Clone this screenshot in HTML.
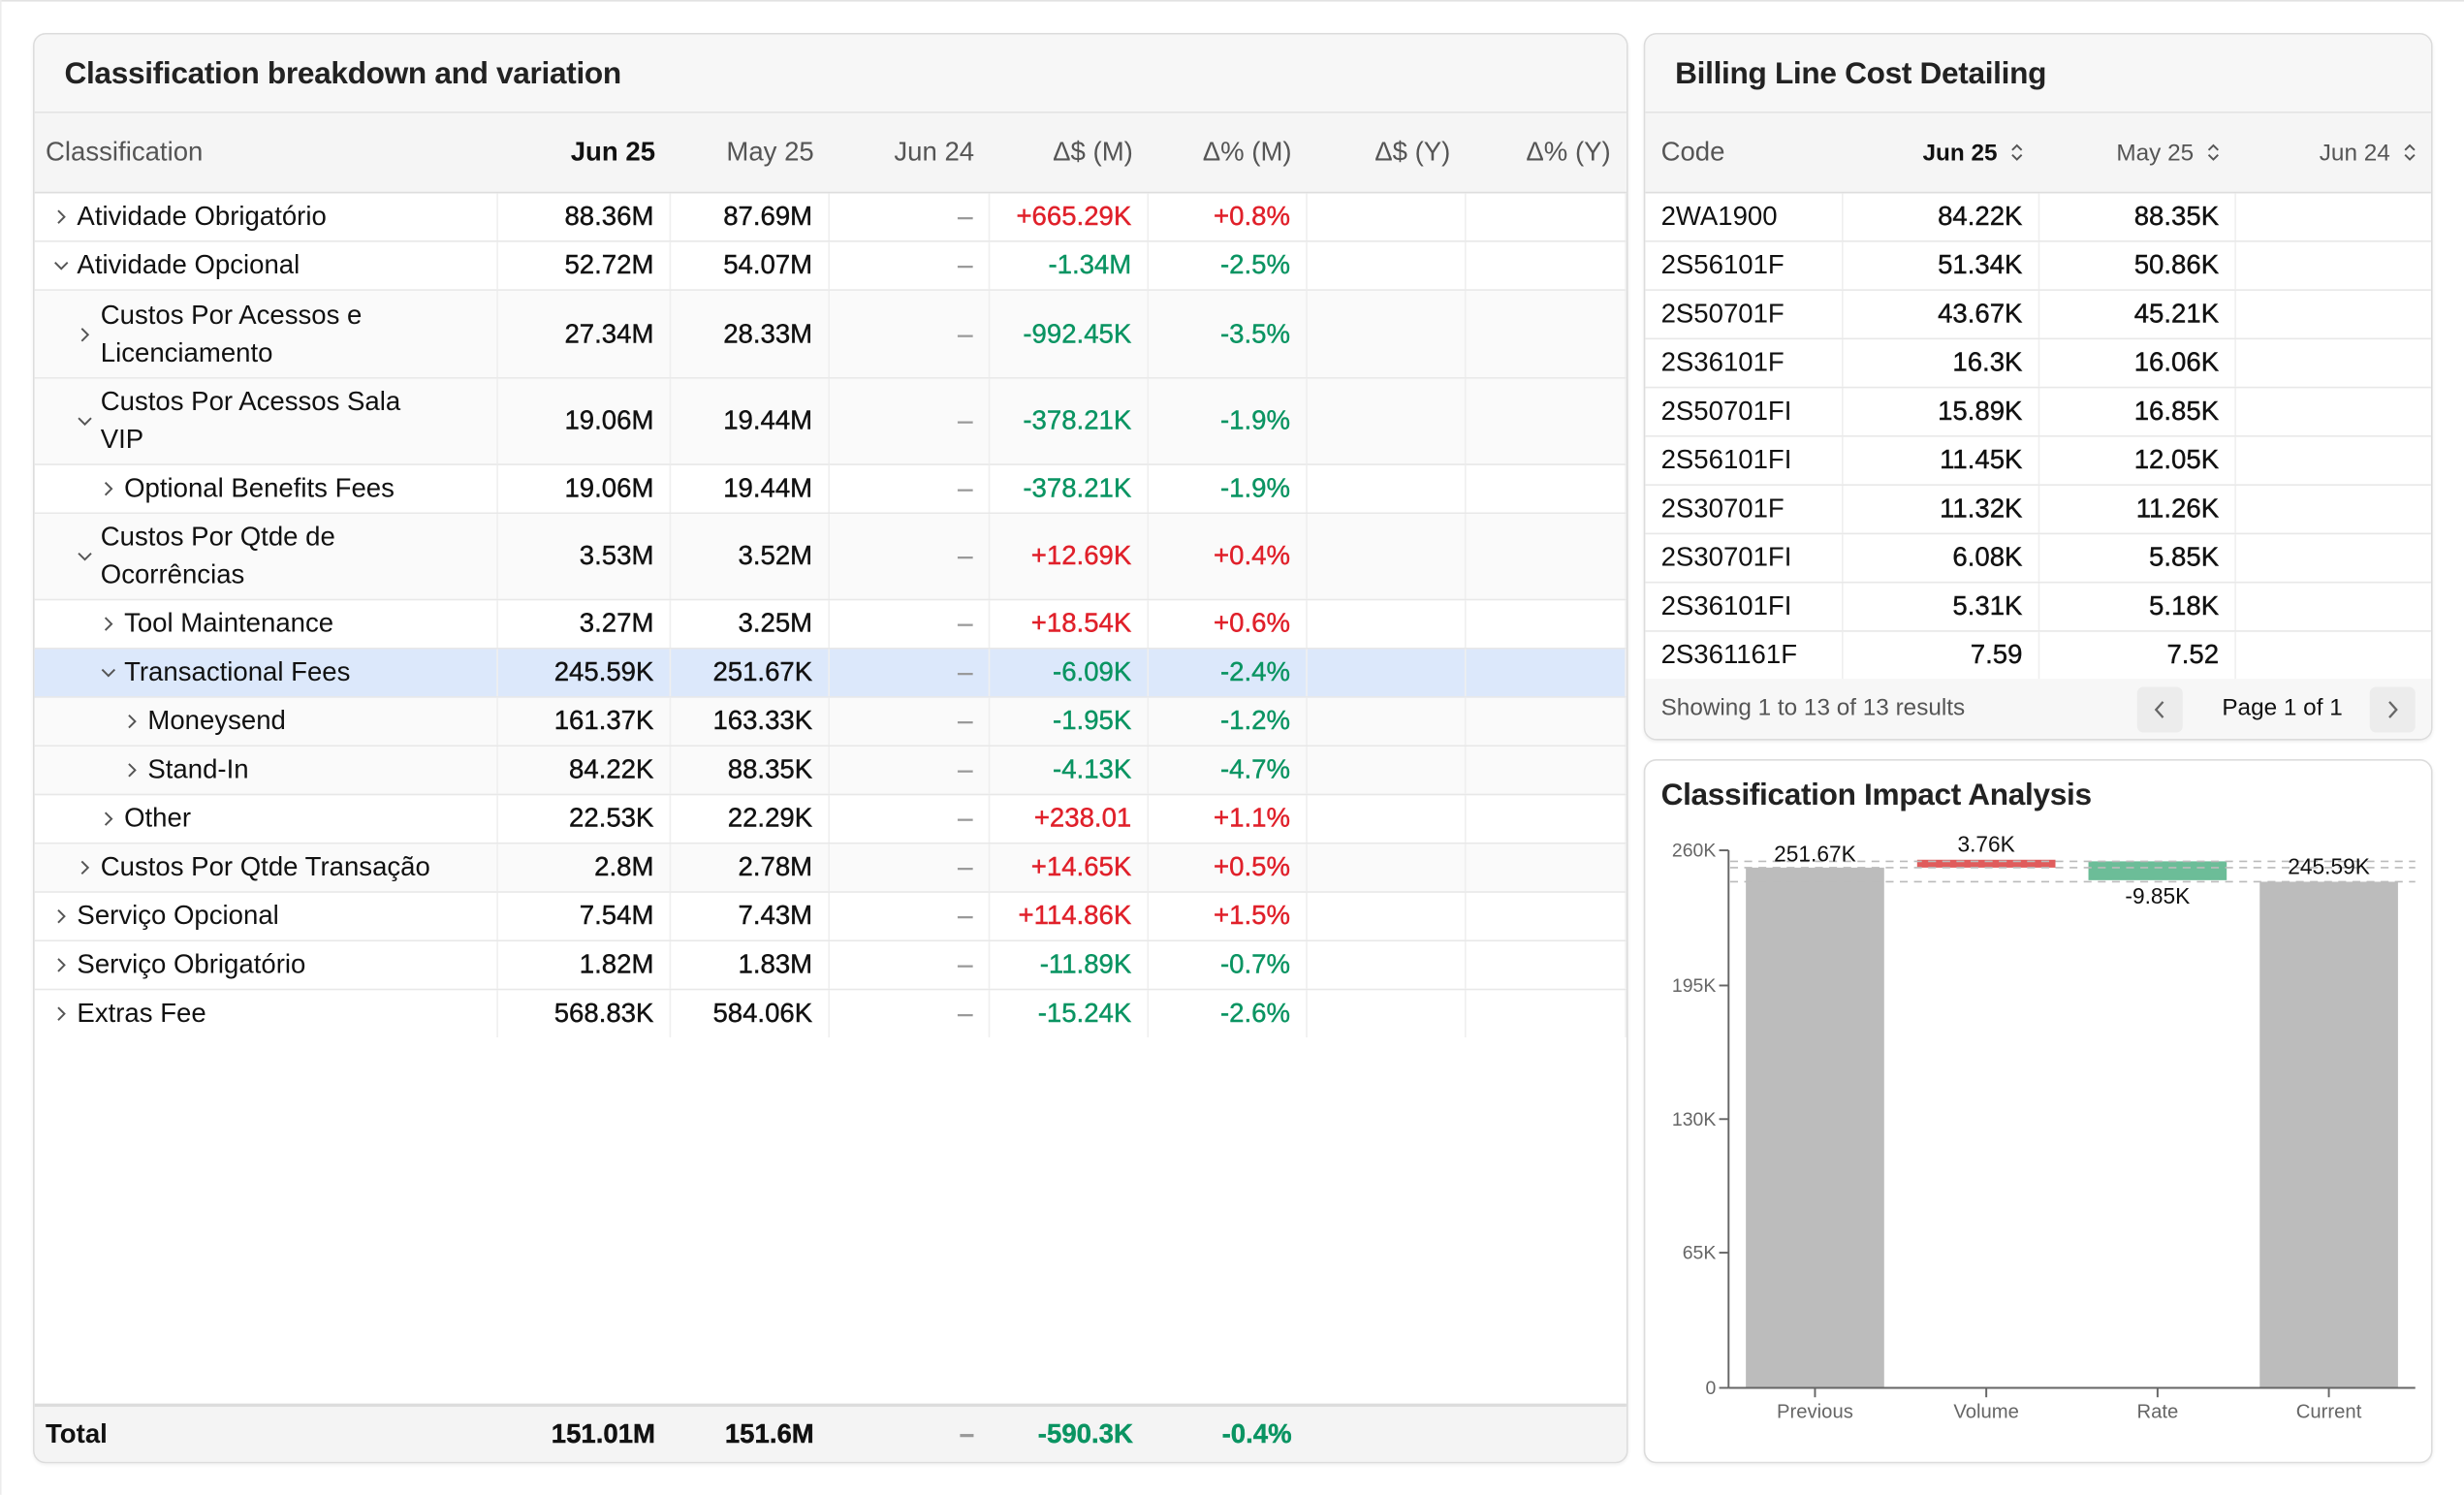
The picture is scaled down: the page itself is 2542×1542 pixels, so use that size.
<!DOCTYPE html>
<html><head><meta charset="utf-8"><style>
html,body{margin:0;padding:0;background:#fff;}
body{width:2542px;height:1542px;overflow:hidden;position:relative;}
#w{position:absolute;left:0;top:0;width:1568px;height:951px;transform:scale(1.62117);transform-origin:0 0;font-family:"Liberation Sans",sans-serif;color:#111;}
.card{position:absolute;border:1px solid #dcdcdc;border-radius:8px;background:#fff;overflow:hidden;box-sizing:border-box;box-shadow:0 1px 2px rgba(0,0,0,.06);}
.title{height:50px;background:#f7f7f7;border-bottom:1px solid #e2e2e2;font-size:19.5px;font-weight:bold;color:#222;line-height:50px;padding-left:19px;box-sizing:border-box;letter-spacing:-.2px;}
.row{display:grid;border-bottom:1px solid #e8e8e8;box-sizing:border-box;font-size:17px;}
.row>div{display:flex;align-items:center;box-sizing:border-box;border-right:1px solid #efefef;}
.row>div.r{justify-content:flex-end;padding-right:10px;-webkit-text-stroke:0.25px currentColor;}
.L{grid-template-columns:295px 110px 101px 102px 101px 101px 101px 102px;}
.hd{height:51px;background:#f5f5f5;border-bottom:1px solid #ddd;color:#555;font-size:17px;}
.hd>div{border-right:none !important;}
.hd>div.r{-webkit-text-stroke:0;}
.g{color:#0a9462;}.rd{color:#e0202a;}.da{color:#999;}
.alt{background:#fafafa;}
.hl{background:#dce8fb;}
.lab{line-height:24px;}
svg.ch{width:10px;height:10px;margin-right:5px;flex:none;}
.R{grid-template-columns:126px 125px 125px 125px;height:31px;}
.R>div{padding-left:10px;}
.srt{width:9px;height:12px;margin-left:8px;}
</style></head><body><div id="w">
<div style="position:absolute;left:0;top:0;width:1568px;height:1px;background:#e2e2e2"></div>
<div style="position:absolute;left:0;top:0;width:1px;height:951px;background:#ececec"></div>

<div class="card" style="left:21px;top:21px;width:1015px;height:910px;">
<div class="title">Classification breakdown and variation</div>
<div class="row L hd"><div style="padding-left:7px">Classification</div><div class="r" style="color:#111;font-weight:bold">Jun 25</div><div class="r">May 25</div><div class="r">Jun 24</div><div class="r">Δ$ (M)</div><div class="r">Δ% (M)</div><div class="r">Δ$ (Y)</div><div class="r">Δ% (Y)</div></div>

<div class="row L" style="height:31px"><div style="padding-left:12px"><svg class="ch" viewBox="0 0 10 10"><path d="M3 1L7 5L3 9" fill="none" stroke="#555" stroke-width="1.2"/></svg><span>Atividade Obrigatório</span></div><div class="r">88.36M</div><div class="r">87.69M</div><div class="r da">–</div><div class="r rd">+665.29K</div><div class="r rd">+0.8%</div><div></div><div></div></div>

<div class="row L" style="height:31px"><div style="padding-left:12px"><svg class="ch" viewBox="0 0 10 10"><path d="M1 3L5 7L9 3" fill="none" stroke="#555" stroke-width="1.2"/></svg><span>Atividade Opcional</span></div><div class="r">52.72M</div><div class="r">54.07M</div><div class="r da">–</div><div class="r g">-1.34M</div><div class="r g">-2.5%</div><div></div><div></div></div>

<div class="row L alt" style="height:56px"><div style="padding-left:27px"><svg class="ch" viewBox="0 0 10 10"><path d="M3 1L7 5L3 9" fill="none" stroke="#555" stroke-width="1.2"/></svg><span class="lab">Custos Por Acessos e<br>Licenciamento</span></div><div class="r">27.34M</div><div class="r">28.33M</div><div class="r da">–</div><div class="r g">-992.45K</div><div class="r g">-3.5%</div><div></div><div></div></div>

<div class="row L alt" style="height:55px"><div style="padding-left:27px"><svg class="ch" viewBox="0 0 10 10"><path d="M1 3L5 7L9 3" fill="none" stroke="#555" stroke-width="1.2"/></svg><span class="lab">Custos Por Acessos Sala<br>VIP</span></div><div class="r">19.06M</div><div class="r">19.44M</div><div class="r da">–</div><div class="r g">-378.21K</div><div class="r g">-1.9%</div><div></div><div></div></div>

<div class="row L" style="height:31px"><div style="padding-left:42px"><svg class="ch" viewBox="0 0 10 10"><path d="M3 1L7 5L3 9" fill="none" stroke="#555" stroke-width="1.2"/></svg><span>Optional Benefits Fees</span></div><div class="r">19.06M</div><div class="r">19.44M</div><div class="r da">–</div><div class="r g">-378.21K</div><div class="r g">-1.9%</div><div></div><div></div></div>

<div class="row L alt" style="height:55px"><div style="padding-left:27px"><svg class="ch" viewBox="0 0 10 10"><path d="M1 3L5 7L9 3" fill="none" stroke="#555" stroke-width="1.2"/></svg><span class="lab">Custos Por Qtde de<br>Ocorrências</span></div><div class="r">3.53M</div><div class="r">3.52M</div><div class="r da">–</div><div class="r rd">+12.69K</div><div class="r rd">+0.4%</div><div></div><div></div></div>

<div class="row L" style="height:31px"><div style="padding-left:42px"><svg class="ch" viewBox="0 0 10 10"><path d="M3 1L7 5L3 9" fill="none" stroke="#555" stroke-width="1.2"/></svg><span>Tool Maintenance</span></div><div class="r">3.27M</div><div class="r">3.25M</div><div class="r da">–</div><div class="r rd">+18.54K</div><div class="r rd">+0.6%</div><div></div><div></div></div>

<div class="row L hl" style="height:31px"><div style="padding-left:42px"><svg class="ch" viewBox="0 0 10 10"><path d="M1 3L5 7L9 3" fill="none" stroke="#555" stroke-width="1.2"/></svg><span>Transactional Fees</span></div><div class="r">245.59K</div><div class="r">251.67K</div><div class="r da">–</div><div class="r g">-6.09K</div><div class="r g">-2.4%</div><div></div><div></div></div>

<div class="row L alt" style="height:31px"><div style="padding-left:57px"><svg class="ch" viewBox="0 0 10 10"><path d="M3 1L7 5L3 9" fill="none" stroke="#555" stroke-width="1.2"/></svg><span>Moneysend</span></div><div class="r">161.37K</div><div class="r">163.33K</div><div class="r da">–</div><div class="r g">-1.95K</div><div class="r g">-1.2%</div><div></div><div></div></div>

<div class="row L alt" style="height:31px"><div style="padding-left:57px"><svg class="ch" viewBox="0 0 10 10"><path d="M3 1L7 5L3 9" fill="none" stroke="#555" stroke-width="1.2"/></svg><span>Stand-In</span></div><div class="r">84.22K</div><div class="r">88.35K</div><div class="r da">–</div><div class="r g">-4.13K</div><div class="r g">-4.7%</div><div></div><div></div></div>

<div class="row L" style="height:31px"><div style="padding-left:42px"><svg class="ch" viewBox="0 0 10 10"><path d="M3 1L7 5L3 9" fill="none" stroke="#555" stroke-width="1.2"/></svg><span>Other</span></div><div class="r">22.53K</div><div class="r">22.29K</div><div class="r da">–</div><div class="r rd">+238.01</div><div class="r rd">+1.1%</div><div></div><div></div></div>

<div class="row L alt" style="height:31px"><div style="padding-left:27px"><svg class="ch" viewBox="0 0 10 10"><path d="M3 1L7 5L3 9" fill="none" stroke="#555" stroke-width="1.2"/></svg><span>Custos Por Qtde Transação</span></div><div class="r">2.8M</div><div class="r">2.78M</div><div class="r da">–</div><div class="r rd">+14.65K</div><div class="r rd">+0.5%</div><div></div><div></div></div>

<div class="row L" style="height:31px"><div style="padding-left:12px"><svg class="ch" viewBox="0 0 10 10"><path d="M3 1L7 5L3 9" fill="none" stroke="#555" stroke-width="1.2"/></svg><span>Serviço Opcional</span></div><div class="r">7.54M</div><div class="r">7.43M</div><div class="r da">–</div><div class="r rd">+114.86K</div><div class="r rd">+1.5%</div><div></div><div></div></div>

<div class="row L" style="height:31px"><div style="padding-left:12px"><svg class="ch" viewBox="0 0 10 10"><path d="M3 1L7 5L3 9" fill="none" stroke="#555" stroke-width="1.2"/></svg><span>Serviço Obrigatório</span></div><div class="r">1.82M</div><div class="r">1.83M</div><div class="r da">–</div><div class="r g">-11.89K</div><div class="r g">-0.7%</div><div></div><div></div></div>

<div class="row L" style="height:30px;border-bottom:none"><div style="padding-left:12px"><svg class="ch" viewBox="0 0 10 10"><path d="M3 1L7 5L3 9" fill="none" stroke="#555" stroke-width="1.2"/></svg><span>Extras Fee</span></div><div class="r">568.83K</div><div class="r">584.06K</div><div class="r da">–</div><div class="r g">-15.24K</div><div class="r g">-2.6%</div><div></div><div></div></div>

<div class="row L" style="position:absolute;left:0;right:0;bottom:0;height:37px;background:#f4f4f4;border-top:2px solid #dcdcdc;border-bottom:none;font-weight:bold"><div style="padding-left:7px;border:none">Total</div><div class="r" style="border:none">151.01M</div><div class="r" style="border:none">151.6M</div><div class="r da" style="border:none">–</div><div class="r g" style="border:none">-590.3K</div><div class="r g" style="border:none">-0.4%</div><div style="border:none"></div><div style="border:none"></div></div>
</div>

<div class="card" style="left:1046px;top:21px;width:502px;height:450px;">
<div class="title">Billing Line Cost Detailing</div>
<div class="row R hd" style="height:51px"><div>Code</div><div class="r" style="color:#111;font-weight:bold;font-size:15px">Jun 25<svg class="srt" viewBox="0 0 9 12"><path d="M1.5 4.5L4.5 1.5L7.5 4.5M1.5 7.5L4.5 10.5L7.5 7.5" fill="none" stroke="#555" stroke-width="1.2"/></svg></div><div class="r" style="font-size:15px">May 25<svg class="srt" viewBox="0 0 9 12"><path d="M1.5 4.5L4.5 1.5L7.5 4.5M1.5 7.5L4.5 10.5L7.5 7.5" fill="none" stroke="#555" stroke-width="1.2"/></svg></div><div class="r" style="font-size:15px">Jun 24<svg class="srt" viewBox="0 0 9 12"><path d="M1.5 4.5L4.5 1.5L7.5 4.5M1.5 7.5L4.5 10.5L7.5 7.5" fill="none" stroke="#555" stroke-width="1.2"/></svg></div></div>
<div class="row R"><div>2WA1900</div><div class="r">84.22K</div><div class="r">88.35K</div><div></div></div>
<div class="row R"><div>2S56101F</div><div class="r">51.34K</div><div class="r">50.86K</div><div></div></div>
<div class="row R"><div>2S50701F</div><div class="r">43.67K</div><div class="r">45.21K</div><div></div></div>
<div class="row R"><div>2S36101F</div><div class="r">16.3K</div><div class="r">16.06K</div><div></div></div>
<div class="row R"><div>2S50701FI</div><div class="r">15.89K</div><div class="r">16.85K</div><div></div></div>
<div class="row R"><div>2S56101FI</div><div class="r">11.45K</div><div class="r">12.05K</div><div></div></div>
<div class="row R"><div>2S30701F</div><div class="r">11.32K</div><div class="r">11.26K</div><div></div></div>
<div class="row R"><div>2S30701FI</div><div class="r">6.08K</div><div class="r">5.85K</div><div></div></div>
<div class="row R"><div>2S36101FI</div><div class="r">5.31K</div><div class="r">5.18K</div><div></div></div>
<div class="row R"><div>2S361161F</div><div class="r">7.59</div><div class="r">7.52</div><div></div></div>
<div style="position:absolute;left:0;right:0;bottom:0;height:38px;background:#f7f7f7;font-size:15px;">
<div style="position:absolute;left:10px;top:10px;color:#555">Showing 1 to 13 of 13 results</div>
<div style="position:absolute;left:313px;top:5px;width:29px;height:29px;background:#ececec;border-radius:4px"><svg width="29" height="29" viewBox="0 0 29 29"><path d="M16.5 9.5L12 14.5L16.5 19.5" fill="none" stroke="#666" stroke-width="1.4"/></svg></div>
<div style="position:absolute;left:367px;top:10px;color:#111">Page 1 of 1</div>
<div style="position:absolute;left:461px;top:5px;width:29px;height:29px;background:#ececec;border-radius:4px"><svg width="29" height="29" viewBox="0 0 29 29"><path d="M12.5 9.5L17 14.5L12.5 19.5" fill="none" stroke="#666" stroke-width="1.4"/></svg></div>
</div>
</div>

<div class="card" style="left:1046px;top:483px;width:502px;height:448px;">
<div style="position:absolute;left:10px;top:11px;font-size:19.5px;font-weight:bold;color:#222;letter-spacing:-.2px">Classification Impact Analysis</div>
</div>

<svg style="position:absolute;left:0;top:0" width="1568" height="951" viewBox="0 0 1568 951" font-family="Liberation Sans, sans-serif">
<rect x="1111" y="552" width="88" height="331" fill="#bcbcbc"/>
<rect x="1438" y="561" width="88" height="322" fill="#bcbcbc"/>
<rect x="1220" y="547" width="88" height="5" fill="#e05c5c"/>
<rect x="1329" y="548" width="88" height="12" fill="#6cbd98"/>
<g stroke="#bbb" stroke-width="1" stroke-dasharray="5,4">
<line x1="1101" y1="548" x2="1537" y2="548"/>
<line x1="1101" y1="552" x2="1537" y2="552"/>
<line x1="1101" y1="561" x2="1537" y2="561"/>
</g>
<g stroke="#666" stroke-width="1.2">
<line x1="1100" y1="541" x2="1100" y2="883"/>
<line x1="1100" y1="883" x2="1537" y2="883"/>
<line x1="1094" y1="541" x2="1100" y2="541"/>
<line x1="1094" y1="627" x2="1100" y2="627"/>
<line x1="1094" y1="712" x2="1100" y2="712"/>
<line x1="1094" y1="797" x2="1100" y2="797"/>
<line x1="1094" y1="883" x2="1100" y2="883"/>
<line x1="1155" y1="883" x2="1155" y2="889"/>
<line x1="1264" y1="883" x2="1264" y2="889"/>
<line x1="1373" y1="883" x2="1373" y2="889"/>
<line x1="1482" y1="883" x2="1482" y2="889"/>
</g>
<g font-size="12" fill="#666" text-anchor="end">
<text x="1092" y="545">260K</text>
<text x="1092" y="631">195K</text>
<text x="1092" y="716">130K</text>
<text x="1092" y="801">65K</text>
<text x="1092" y="887">0</text>
</g>
<g font-size="12.5" fill="#666" text-anchor="middle">
<text x="1155" y="902">Previous</text>
<text x="1264" y="902">Volume</text>
<text x="1373" y="902">Rate</text>
<text x="1482" y="902">Current</text>
</g>
<g font-size="14" fill="#111" text-anchor="middle">
<text x="1155" y="548">251.67K</text>
<text x="1264" y="542">3.76K</text>
<text x="1373" y="575">-9.85K</text>
<text x="1482" y="556">245.59K</text>
</g>
</svg>

</div></body></html>
